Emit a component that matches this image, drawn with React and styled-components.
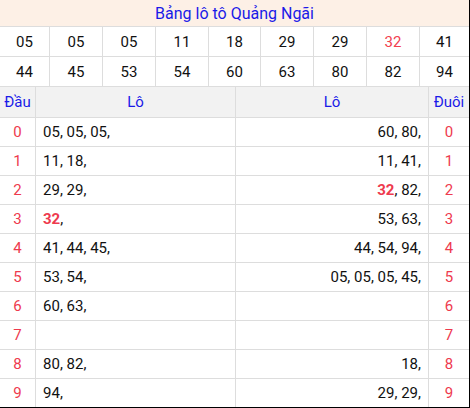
import React from "react";
import styled, { createGlobalStyle } from "styled-components";

const Global = createGlobalStyle`
  html, body { margin: 0; padding: 0; background: #fff; }
  body { font-family: Roboto, "Liberation Sans", Arial, sans-serif; }
`;

const Frame = styled.div`
  width: 470px;
  height: 408px;
  box-sizing: border-box;
  border-right: 1px solid #000;
  border-bottom: 1px solid #000;
  background: #dddddd;
  display: flex;
  flex-direction: column;
  gap: 1px;
  overflow: hidden;
`;

const Title = styled.div`
  height: 27px;
  background: #fdf0e6;
  color: #1a1ae8;
  font-size: 16px;
  display: flex;
  align-items: center;
  justify-content: center;
`;

const NumberGrid = styled.div`
  display: grid;
  grid-template-columns: 49px 52px 52px 52px 51px 52px 52px 52px 49px;
  grid-auto-rows: 29px;
  gap: 1px;
`;

const NumCell = styled.div`
  background: #fff;
  display: flex;
  align-items: center;
  justify-content: center;
  font-size: 15px;
  color: ${(p) => (p.$hot ? "#f2404f" : "#111")};
`;

const LotoGrid = styled.div`
  display: grid;
  grid-template-columns: 35px 199px 192px 40px;
  grid-template-rows: 30px;
  grid-auto-rows: 28px;
  gap: 1px;
`;

const HeadCell = styled.div`
  background: #f2f2f2;
  color: #1a1ae8;
  font-size: 15px;
  display: flex;
  align-items: center;
  justify-content: center;
`;

const IndexCell = styled.div`
  background: #fff;
  color: #ee3a4e;
  font-size: 15px;
  display: flex;
  align-items: center;
  justify-content: center;
`;

const ListCell = styled.div`
  background: #fff;
  color: #111;
  font-size: 15px;
  display: flex;
  align-items: center;
  justify-content: ${(p) => (p.$right ? "flex-end" : "flex-start")};
  padding: 0 7px;
  white-space: nowrap;
`;

const Hot = styled.b`
  color: #ee3a4e;
  font-weight: 700;
`;

const numbers = [
  ["05", "05", "05", "11", "18", "29", "29", "32", "41"],
  ["44", "45", "53", "54", "60", "63", "80", "82", "94"],
];

const dau = [
  ["05", "05", "05"],
  ["11", "18"],
  ["29", "29"],
  ["32"],
  ["41", "44", "45"],
  ["53", "54"],
  ["60", "63"],
  [],
  ["80", "82"],
  ["94"],
];

const duoi = [
  ["60", "80"],
  ["11", "41"],
  ["32", "82"],
  ["53", "63"],
  ["44", "54", "94"],
  ["05", "05", "05", "45"],
  [],
  [],
  ["18"],
  ["29", "29"],
];

const List = ({ items }) =>
  items.map((n, i) => (
    <React.Fragment key={i}>
      {n === "32" ? <Hot>{n}</Hot> : n}
      {","}
      {i < items.length - 1 ? " " : ""}
    </React.Fragment>
  ));

export default function App() {
  return (
    <>
      <Global />
      <Frame>
        <Title>Bảng lô tô Quảng Ngãi</Title>
        <NumberGrid>
          {numbers.flat().map((n, i) => (
            <NumCell key={i} $hot={n === "32"}>
              {n}
            </NumCell>
          ))}
        </NumberGrid>
        <LotoGrid>
          <HeadCell>Đầu</HeadCell>
          <HeadCell>Lô</HeadCell>
          <HeadCell>Lô</HeadCell>
          <HeadCell>Đuôi</HeadCell>
          {dau.map((row, i) => (
            <React.Fragment key={i}>
              <IndexCell>{i}</IndexCell>
              <ListCell>
                <List items={row} />
              </ListCell>
              <ListCell $right>
                <List items={duoi[i]} />
              </ListCell>
              <IndexCell>{i}</IndexCell>
            </React.Fragment>
          ))}
        </LotoGrid>
      </Frame>
    </>
  );
}
